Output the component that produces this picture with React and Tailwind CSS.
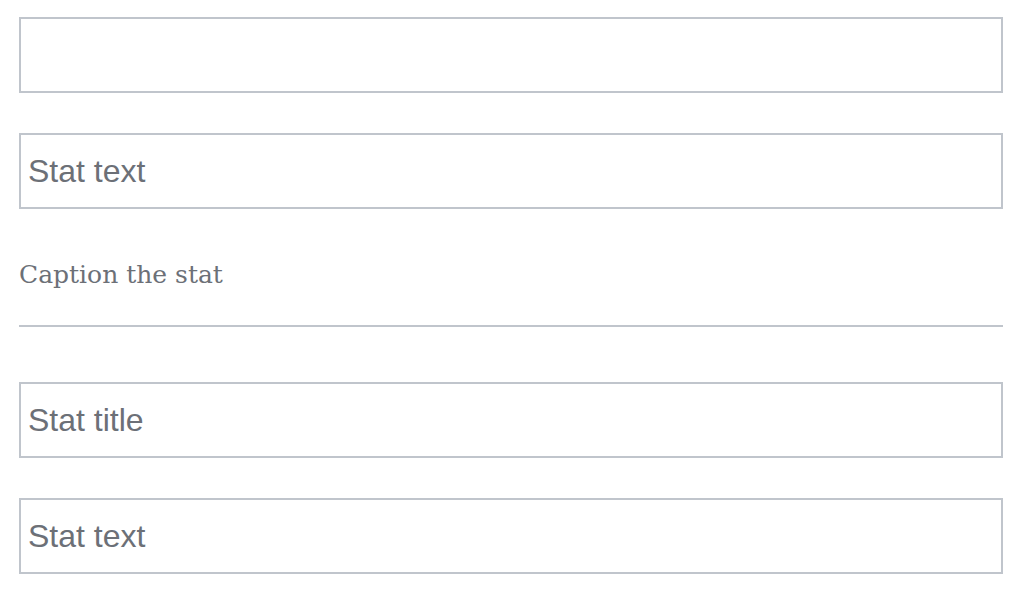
const Field = ({ placeholder }) => (
  <input
    type="text"
    placeholder={placeholder}
    className="block w-full h-[76px] border-2 border-[#c0c5cc] bg-white px-[7px] text-[32px] text-[#6c7077] placeholder:text-[#6c7077] outline-none"
    style={{ fontFamily: '"Liberation Sans", Arial, sans-serif' }}
  />
)

const App = () => {
  return (
    <div className="w-[1024px] h-[597px] bg-white pl-[19px] pr-[21px] pt-[17px] overflow-hidden">
      <div className="flex flex-col gap-[40px]">
        <Field placeholder="" />
        <Field placeholder="Stat text" />
      </div>
      <p
        className="mt-[52px] text-[25px] leading-[28px] text-[#6c7077]"
        style={{ fontFamily: '"DejaVu Serif", serif' }}
      >
        Caption the stat
      </p>
      <div className="mt-[36px] h-[2px] bg-[#c0c5cc]" />
      <div className="mt-[55px] flex flex-col gap-[40px]">
        <Field placeholder="Stat title" />
        <Field placeholder="Stat text" />
      </div>
    </div>
  )
}

export default App
